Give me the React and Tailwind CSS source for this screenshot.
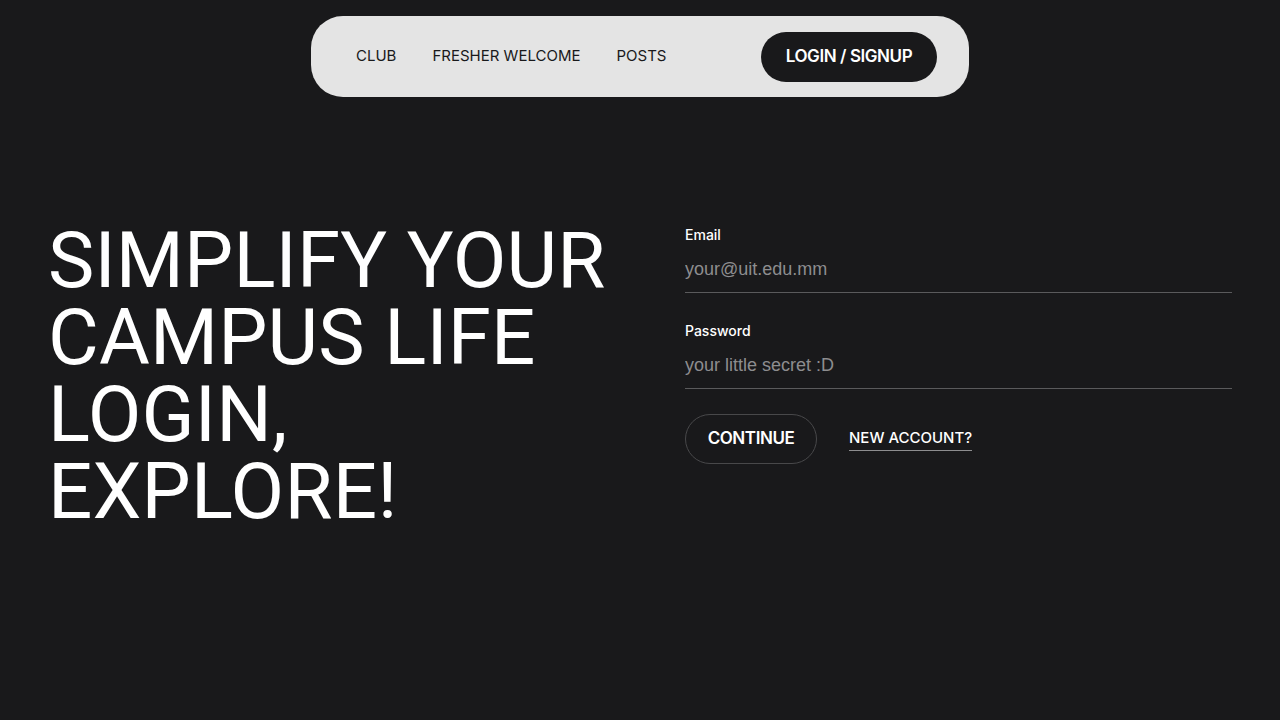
import { useState } from 'react';

function NavBar() {
    return (
        <nav className="mx-auto flex h-[81px] w-[658px] items-center justify-between rounded-[32px] bg-[#e4e4e4] pl-[45px] pr-8">
            <div className="flex items-center gap-[36px] text-[15px] font-normal text-[#19191b]">
                <a href="#">CLUB</a>
                <a href="#">FRESHER WELCOME</a>
                <a href="#">POSTS</a>
            </div>
            <button className="h-[50px] w-[176px] rounded-full bg-[#19191b] text-[17px] font-semibold tracking-tight text-white">
                LOGIN / SIGNUP
            </button>
        </nav>
    );
}

function Field({ label, type, placeholder, value, onChange }) {
    return (
        <label className="block">
            <span className="block text-[14px] font-medium leading-none text-white">{label}</span>
            <input
                type={type}
                value={value}
                onChange={(e) => onChange(e.target.value)}
                placeholder={placeholder}
                className="mt-[5px] block h-[46px] w-full border-b border-[#5a5a5c] bg-transparent text-[18px] text-white outline-none placeholder:text-[#8d8d8f] [font-family:'Liberation_Sans',Arial,sans-serif]"
            />
        </label>
    );
}

export default function App() {
    const [email, setEmail] = useState("");
    const [password, setPassword] = useState("");

    return (
        <div className="min-h-[720px] w-full bg-[#19191b] pt-4 [font-family:Inter,'Noto_Sans',sans-serif]">
            <NavBar />

            <main className="mt-[129px] grid grid-cols-2 gap-x-[90px] px-12">
                {/* titulo */}
                <h1 className="-mt-1 whitespace-nowrap text-[78px] font-normal leading-[77px] tracking-[0.002em] text-white [font-family:Roboto,sans-serif]">
                    SIMPLIFY YOUR
                    <br />
                    CAMPUS LIFE
                    <br />
                    LOGIN,
                    <br />
                    EXPLORE!
                </h1>

                {/* formulario */}
                <form onSubmit={(e) => e.preventDefault()} className="pt-[2px]">
                    <Field label="Email" type="email" placeholder="your@uit.edu.mm" value={email} onChange={setEmail} />
                    <div className="mt-[31px]">
                        <Field label="Password" type="password" placeholder="your little secret :D" value={password} onChange={setPassword} />
                    </div>
                    <div className="mt-[25px] flex items-center gap-8">
                        <button type="submit" className="h-[50px] w-[132px] rounded-full border border-[#48484a] text-[17px] font-semibold tracking-tight text-white">
                            CONTINUE
                        </button>
                        <a href="#" className="border-b border-[#8d8d8f] pb-[1px] text-[15px] font-medium text-white">
                            NEW ACCOUNT?
                        </a>
                    </div>
                </form>
            </main>
        </div>
    );
}
